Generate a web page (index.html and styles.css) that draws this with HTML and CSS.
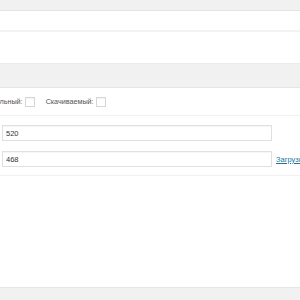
FILE: index.html
```html
<!DOCTYPE html>
<html>
<head>
<meta charset="utf-8">
<link rel="stylesheet" href="styles.css">
</head>
<body>
<div class="topbar"></div>
<div class="row row-a"></div>
<div class="row row-b"></div>
<div class="section-head"></div>
<div class="options">
  <div class="opt-group">
    <span class="opt-label">Виртуальный:</span><span class="checkbox"></span>
    <span class="opt-label second">Скачиваемый:</span><span class="checkbox"></span>
  </div>
</div>
<div class="fields">
  <div class="field"><input class="text-input" type="text" value="520"></div>
  <div class="field"><input class="text-input" type="text" value="468"><a class="link" href="#">Загрузить</a></div>
</div>
<div class="empty"></div>
<div class="bottombar"></div>
</body>
</html>
```
FILE: styles.css
```css
html, body {
  margin: 0;
  padding: 0;
  background: #ffffff;
  width: 300px;
  height: 300px;
  overflow: hidden;
  font-family: "Liberation Sans", Arial, sans-serif;
}
.topbar {
  height: 10px;
  background: #f1f1f1;
  border-bottom: 1px solid #e4e4e4;
}
.row {
  background: #ffffff;
}
.row-a {
  height: 19px;
  border-bottom: 2px solid #f3f3f3;
}
.row-b {
  height: 31px;
  border-bottom: 1px solid #ebebeb;
}
.section-head {
  height: 23px;
  background: #f1f1f1;
  border-bottom: 1px solid #e6e6e6;
}
.options {
  height: 27px;
  border-bottom: 1px solid #f1f1f1;
  display: flex;
  align-items: center;
  overflow: hidden;
}
.opt-group {
  display: flex;
  align-items: center;
  margin-left: -24px;
  font-size: 7.2px;
  color: #555555;
  white-space: nowrap;
}
.opt-label {
  line-height: 9px;
}
.opt-label.second {
  margin-left: 11px;
}
.checkbox {
  display: inline-block;
  flex-shrink: 0;
  width: 8px;
  height: 8px;
  border: 1px solid #d6d6d6;
  background: #ffffff;
  margin-left: 2px;
  box-shadow: inset 0 1px 1px rgba(0,0,0,0.05);
}
.fields {
  padding: 9px 0 8px 2px;
  display: flex;
  flex-direction: column;
  gap: 10px;
  border-bottom: 1px solid #f1f1f1;
}
.field {
  display: flex;
  align-items: center;
  white-space: nowrap;
}
.text-input {
  box-sizing: border-box;
  flex-shrink: 0;
  width: 270px;
  height: 16px;
  margin: 0;
  padding: 0 3px;
  border: 1px solid #e0e0e0;
  box-shadow: inset 0 1px 1px rgba(0,0,0,0.04);
  font-family: "Liberation Sans", Arial, sans-serif;
  font-size: 7.5px;
  color: #333333;
  background: #ffffff;
  outline: none;
}
.link {
  flex-shrink: 0;
  margin-left: 4px;
  font-size: 7.5px;
  color: #21759b;
  text-decoration: underline;
}
.empty {
  height: 111px;
}
.bottombar {
  height: 12px;
  background: #f1f1f1;
  border-top: 1px solid #e6e6e6;
}
```
